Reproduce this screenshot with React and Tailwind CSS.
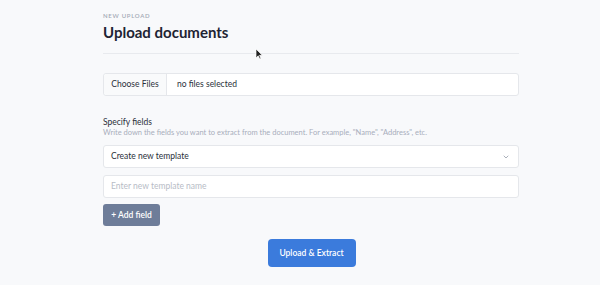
export default function App() {
	return (
		<div className="w-[600px] h-[285px] bg-[#f8f9fb] relative overflow-hidden" style={{ fontFamily: "Lato, 'Open Sans', sans-serif" }}>
			<div className="w-[416px] ml-[103px] pt-[12px] flex flex-col">
				<p className="text-[6px] tracking-[0.12em] text-[#a3a9b6] font-semibold leading-[8px]">NEW UPLOAD</p>
				<h1 className="text-[15px] font-bold text-[#1e2433] leading-[20px] mt-[2px]">Upload documents</h1>
				<div className="h-px bg-[#e8eaee] mt-[11px]" />

				<div className="mt-[19px] h-[23px] flex border border-[#e5e7eb] rounded-[3px] bg-white text-[8.5px] text-[#2a2f3a]">
					<div className="w-[63px] flex items-center justify-center bg-[#f9fafb] border-r border-[#e5e7eb] rounded-l-[3px]">Choose Files</div>
					<div className="flex items-center pl-[10px]">no files selected</div>
				</div>

				<p className="mt-[21px] text-[8.5px] text-[#2a2f3a] leading-[10px]">Specify fields</p>
				<p className="mt-[1px] text-[7.5px] text-[#a8aebb] leading-[10px]">Write down the fields you want to extract from the document. For example, "Name", "Address", etc.</p>

				<div className="mt-[7px] h-[23px] flex items-center justify-between border border-[#e5e7eb] rounded-[3px] bg-white pl-[7px] pr-[8px] text-[8.5px] text-[#2a2f3a]">
					<span>Create new template</span>
					<svg width="8" height="8" viewBox="0 0 24 24" fill="none" stroke="#9aa1ad" strokeWidth="2.5" strokeLinecap="round" strokeLinejoin="round"><path d="M6 9l6 6 6-6" /></svg>
				</div>

				<div className="mt-[7px] h-[23px] flex items-center border border-[#e5e7eb] rounded-[3px] bg-white pl-[7px] text-[8.5px] text-[#b7bcc6]">
					Enter new template name
				</div>

				<div className="mt-[6px] flex">
					<button className="h-[22px] w-[57px] rounded-[3px] bg-[#6e7d99] text-white text-[8.5px] font-semibold">+ Add field</button>
				</div>

				<div className="mt-[13px] flex justify-center pl-[1px]">
					<button className="h-[28px] w-[88px] rounded-[4px] bg-[#3b7bdc] text-white text-[8.5px] font-semibold">Upload &amp; Extract</button>
				</div>
			</div>

			<svg className="absolute left-[255px] top-[48px]" width="8" height="12" viewBox="0 0 8 12">
				<path d="M1 1 L1 10 L3.2 7.8 L4.8 11 L6 10.4 L4.5 7.3 L7.3 7.3 Z" fill="#222" stroke="#fff" strokeWidth="0.7" />
			</svg>
		</div>
	);
}
